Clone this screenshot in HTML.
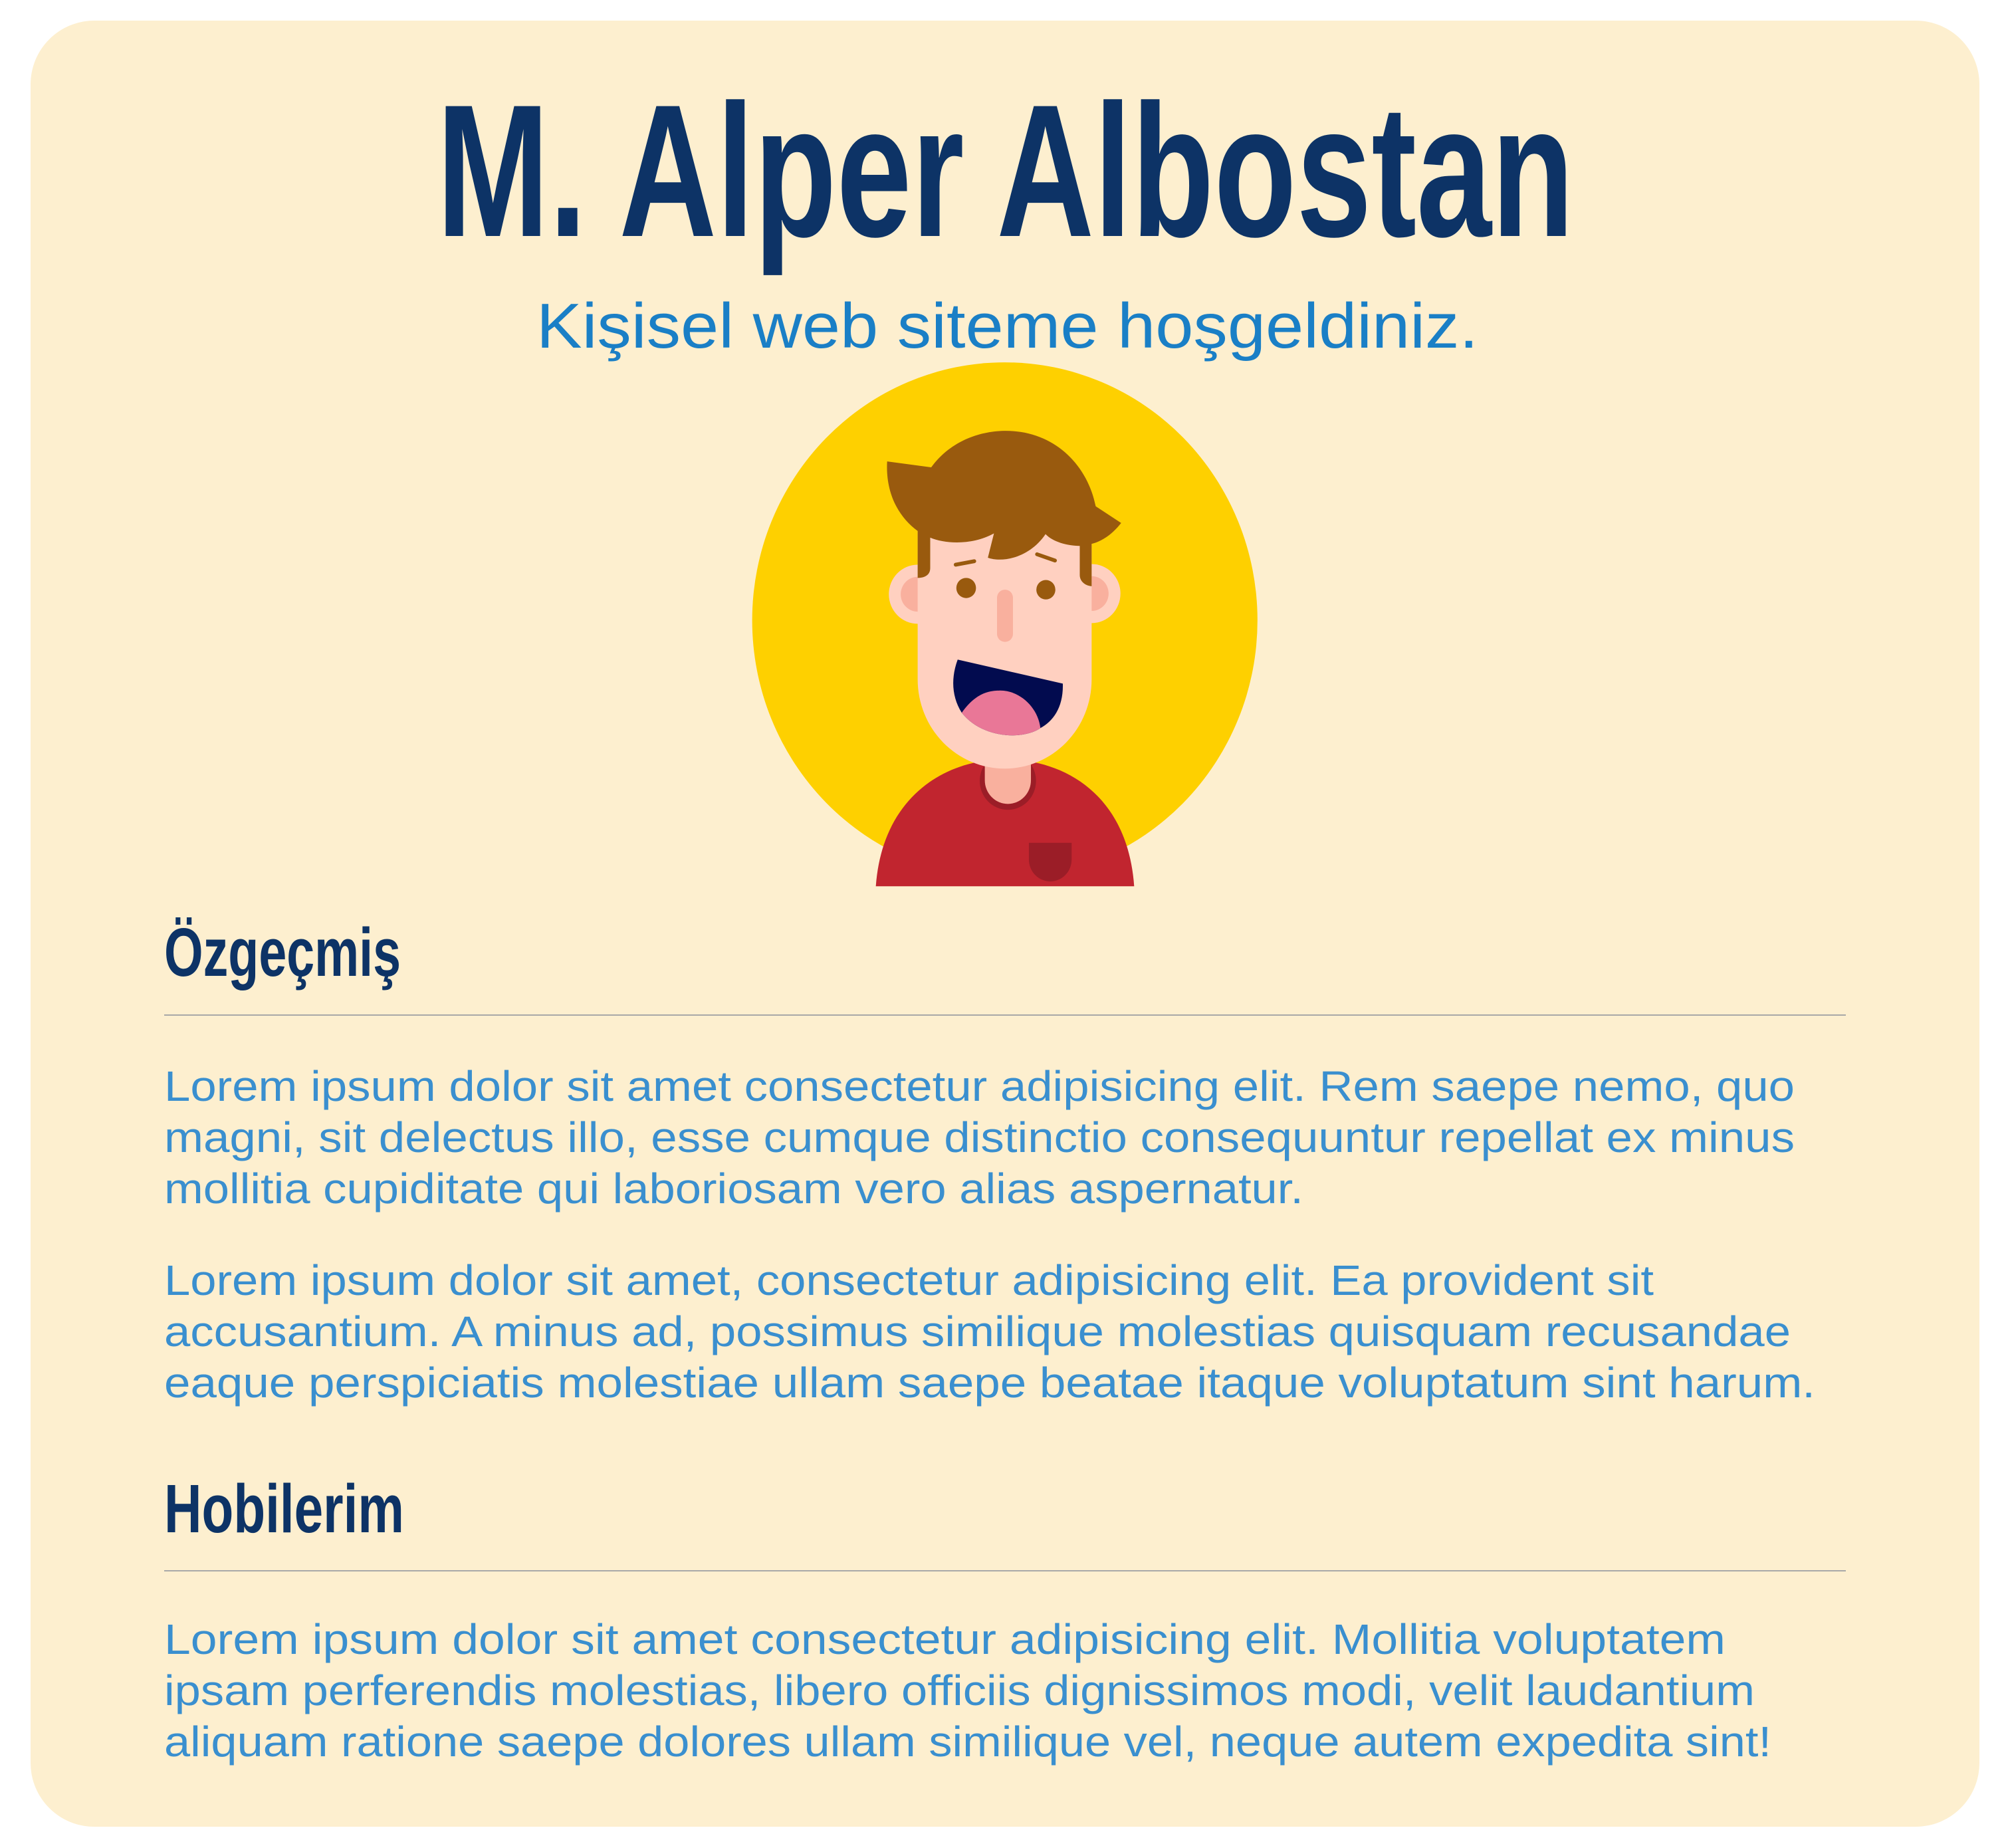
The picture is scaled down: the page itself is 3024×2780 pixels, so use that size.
<!DOCTYPE html>
<html><head><meta charset="utf-8"><style>
html,body{margin:0;padding:0;background:#fff;}
svg{display:block;}
.p{font-family:"Liberation Sans",sans-serif;font-size:64px;fill:#3a8fcf;}
.h{font-family:"Liberation Sans",sans-serif;font-weight:bold;fill:#0d3366;}
</style></head><body>
<svg width="3024" height="2780" viewBox="0 0 3024 2780" xmlns="http://www.w3.org/2000/svg">
<rect x="46" y="31" width="2932" height="2717" rx="96" fill="#fdefcf"/>
<text class="h" x="657" y="355" font-size="284" textLength="1711" lengthAdjust="spacingAndGlyphs">M. Alper Albostan</text>
<text x="807" y="523" font-family="Liberation Sans, sans-serif" font-size="96" fill="#1a7fc6" textLength="1417" lengthAdjust="spacingAndGlyphs">Kişisel web siteme hoşgeldiniz.</text>

<g transform="translate(1100,520) scale(0.5102,0.5230)">
<defs><clipPath id="c"><rect x="0" y="0" width="1568" height="1555"/></clipPath></defs>
<g clip-path="url(#c)">
<ellipse cx="807" cy="790" rx="745" ry="742" fill="#fed000"/>
<path d="M425,1600 C425,1310 620,1190 807,1190 C1000,1190 1190,1310 1190,1600 Z" fill="#c1252f"/>
<circle cx="816" cy="1252" r="83" fill="#9b1d27"/>
<path d="M748,1150 H884 V1250 A68,68 0 0 1 748,1250 Z" fill="#f9b09e"/>
<path d="M878,1430 H1004 V1478 A63,63 0 0 1 878,1478 Z" fill="#9b1d27"/>
<circle cx="550" cy="715" r="85" fill="#ffd0c0"/>
<circle cx="550" cy="715" r="50" fill="#f9b09e"/>
<circle cx="1063" cy="713" r="85" fill="#ffd0c0"/>
<circle cx="1063" cy="713" r="50" fill="#f9b09e"/>
<path d="M550,480 H1063 V960 A256.5,256.5 0 0 1 550,960 Z" fill="#ffd0c0"/>
<path d="M460,333 L590,350 C650,270 740,245 810,245 C950,245 1050,340 1075,462 L1150,510 C1110,560 1070,568 1063,570 V692 C1040,690 1028,675 1028,660 V576 C990,575 950,565 927,542 C880,610 800,625 757,610 L775,540 C710,575 630,570 587,552 V640 C587,660 570,668 550,668 V533 C490,490 455,420 460,333 Z" fill="#995a0e"/>
<path d="M662,630 L717,620 M902,600 L955,618" stroke="#995a0e" stroke-width="11" stroke-linecap="round" fill="none"/>
<circle cx="693" cy="697" r="29" fill="#995a0e"/>
<circle cx="928" cy="702" r="28" fill="#995a0e"/>
<rect x="784" y="702" width="47" height="150" rx="23" fill="#f9b09e"/>
<path d="M668,903 L978,972 C980,1040 950,1080 912,1100 C860,1135 740,1130 680,1056 C650,1010 648,955 668,903 Z" fill="#020b4f"/>
<path d="M680,1056 C720,1000 760,992 790,992 C850,990 905,1040 912,1100 C860,1135 740,1130 680,1056 Z" fill="#e97797"/>
</g></g>

<text class="h" x="247" y="1468" font-size="103" textLength="356" lengthAdjust="spacingAndGlyphs">Özgeçmiş</text>
<rect x="247" y="1526" width="2530" height="2" fill="#a8a8a8"/>
<text class="p" x="247" y="1656" textLength="2453" lengthAdjust="spacingAndGlyphs">Lorem ipsum dolor sit amet consectetur adipisicing elit. Rem saepe nemo, quo</text>
<text class="p" x="247" y="1733" textLength="2453" lengthAdjust="spacingAndGlyphs">magni, sit delectus illo, esse cumque distinctio consequuntur repellat ex minus</text>
<text class="p" x="247" y="1810" textLength="1714" lengthAdjust="spacingAndGlyphs">mollitia cupiditate qui laboriosam vero alias aspernatur.</text>
<text class="p" x="247" y="1948" textLength="2241" lengthAdjust="spacingAndGlyphs">Lorem ipsum dolor sit amet, consectetur adipisicing elit. Ea provident sit</text>
<text class="p" x="247" y="2025" textLength="2447" lengthAdjust="spacingAndGlyphs">accusantium. A minus ad, possimus similique molestias quisquam recusandae</text>
<text class="p" x="247" y="2102" textLength="2484" lengthAdjust="spacingAndGlyphs">eaque perspiciatis molestiae ullam saepe beatae itaque voluptatum sint harum.</text>

<text class="h" x="247" y="2305" font-size="103" textLength="361" lengthAdjust="spacingAndGlyphs">Hobilerim</text>
<rect x="247" y="2362" width="2530" height="2" fill="#a8a8a8"/>
<text class="p" x="247" y="2488" textLength="2349" lengthAdjust="spacingAndGlyphs">Lorem ipsum dolor sit amet consectetur adipisicing elit. Mollitia voluptatem</text>
<text class="p" x="247" y="2565" textLength="2393" lengthAdjust="spacingAndGlyphs">ipsam perferendis molestias, libero officiis dignissimos modi, velit laudantium</text>
<text class="p" x="247" y="2642" textLength="2418" lengthAdjust="spacingAndGlyphs">aliquam ratione saepe dolores ullam similique vel, neque autem expedita sint!</text>
</svg>
</body></html>
